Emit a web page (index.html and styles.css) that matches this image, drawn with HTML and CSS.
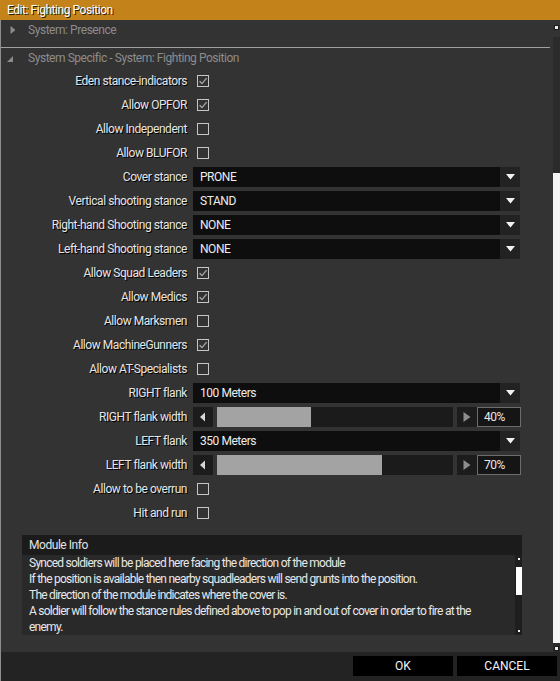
FILE: index.html
```html
<!DOCTYPE html>
<html>
<head>
<meta charset="utf-8">
<title>Edit: Fighting Position</title>
<link rel="stylesheet" href="styles.css">
</head>
<body>
<div class="window">
  <div class="titlebar">Edit: Fighting Position</div>
  <div class="content">
    <div class="main">
      <div class="section-head first">
        <svg class="tri" width="12" height="12" viewBox="0 0 12 12"><polygon points="8,2 13,6 8,10" fill="#8a8a8a" transform="translate(-0.5,0)"/></svg>
        <span>System: Presence</span>
      </div>
      <div class="section-head second">
        <svg class="tri" width="14" height="12" viewBox="0 0 14 12"><polygon points="13,4 13,10 7,10" fill="#8a8a8a"/></svg>
        <span>System Specific - System: Fighting Position</span>
      </div>

      <div class="rows">
        <div class="label">Eden stance-indicators</div>
        <div class="ctrl"><span class="check"><svg width="12" height="12" viewBox="0 0 12 12"><path d="M2.6 6.2 L5 8.6 L9.6 3.2" fill="none" stroke="#a8a8a8" stroke-width="1.3"/></svg></span></div>

        <div class="label">Allow OPFOR</div>
        <div class="ctrl"><span class="check"><svg width="12" height="12" viewBox="0 0 12 12"><path d="M2.6 6.2 L5 8.6 L9.6 3.2" fill="none" stroke="#a8a8a8" stroke-width="1.3"/></svg></span></div>

        <div class="label">Allow Independent</div>
        <div class="ctrl"><span class="check"></span></div>

        <div class="label">Allow BLUFOR</div>
        <div class="ctrl"><span class="check"></span></div>

        <div class="label">Cover stance</div>
        <div class="ctrl"><div class="combo"><span class="combo-text">PRONE</span><span class="combo-arrow"><svg width="9" height="6" viewBox="0 0 9 6"><polygon points="0,0 9,0 4.5,5.5" fill="#f0f0f0"/></svg></span></div></div>

        <div class="label">Vertical shooting stance</div>
        <div class="ctrl"><div class="combo"><span class="combo-text">STAND</span><span class="combo-arrow"><svg width="9" height="6" viewBox="0 0 9 6"><polygon points="0,0 9,0 4.5,5.5" fill="#f0f0f0"/></svg></span></div></div>

        <div class="label">Right-hand Shooting stance</div>
        <div class="ctrl"><div class="combo"><span class="combo-text">NONE</span><span class="combo-arrow"><svg width="9" height="6" viewBox="0 0 9 6"><polygon points="0,0 9,0 4.5,5.5" fill="#f0f0f0"/></svg></span></div></div>

        <div class="label">Left-hand Shooting stance</div>
        <div class="ctrl"><div class="combo"><span class="combo-text">NONE</span><span class="combo-arrow"><svg width="9" height="6" viewBox="0 0 9 6"><polygon points="0,0 9,0 4.5,5.5" fill="#f0f0f0"/></svg></span></div></div>

        <div class="label">Allow Squad Leaders</div>
        <div class="ctrl"><span class="check"><svg width="12" height="12" viewBox="0 0 12 12"><path d="M2.6 6.2 L5 8.6 L9.6 3.2" fill="none" stroke="#a8a8a8" stroke-width="1.3"/></svg></span></div>

        <div class="label">Allow Medics</div>
        <div class="ctrl"><span class="check"><svg width="12" height="12" viewBox="0 0 12 12"><path d="M2.6 6.2 L5 8.6 L9.6 3.2" fill="none" stroke="#a8a8a8" stroke-width="1.3"/></svg></span></div>

        <div class="label">Allow Marksmen</div>
        <div class="ctrl"><span class="check"></span></div>

        <div class="label">Allow MachineGunners</div>
        <div class="ctrl"><span class="check"><svg width="12" height="12" viewBox="0 0 12 12"><path d="M2.6 6.2 L5 8.6 L9.6 3.2" fill="none" stroke="#a8a8a8" stroke-width="1.3"/></svg></span></div>

        <div class="label">Allow AT-Specialists</div>
        <div class="ctrl"><span class="check"></span></div>

        <div class="label">RIGHT flank</div>
        <div class="ctrl"><div class="combo"><span class="combo-text">100 Meters</span><span class="combo-arrow"><svg width="9" height="6" viewBox="0 0 9 6"><polygon points="0,0 9,0 4.5,5.5" fill="#f0f0f0"/></svg></span></div></div>

        <div class="label">RIGHT flank width</div>
        <div class="ctrl">
          <div class="slider">
            <span class="sbtn"><svg width="6" height="10" viewBox="0 0 6 10"><polygon points="5,0.5 5,9.5 0,5" fill="#d8d8d8"/></svg></span>
            <span class="track"><span class="fill" style="width:40%"></span></span>
            <span class="sbtn"><svg width="8" height="10" viewBox="0 0 8 10"><polygon points="0.5,0 0.5,10 7.5,5" fill="#8c8c8c"/></svg></span>
            <span class="value">40%</span>
          </div>
        </div>

        <div class="label">LEFT flank</div>
        <div class="ctrl"><div class="combo"><span class="combo-text">350 Meters</span><span class="combo-arrow"><svg width="9" height="6" viewBox="0 0 9 6"><polygon points="0,0 9,0 4.5,5.5" fill="#f0f0f0"/></svg></span></div></div>

        <div class="label">LEFT flank width</div>
        <div class="ctrl">
          <div class="slider">
            <span class="sbtn"><svg width="6" height="10" viewBox="0 0 6 10"><polygon points="5,0.5 5,9.5 0,5" fill="#d8d8d8"/></svg></span>
            <span class="track"><span class="fill" style="width:70%"></span></span>
            <span class="sbtn"><svg width="8" height="10" viewBox="0 0 8 10"><polygon points="0.5,0 0.5,10 7.5,5" fill="#8c8c8c"/></svg></span>
            <span class="value">70%</span>
          </div>
        </div>

        <div class="label">Allow to be overrun</div>
        <div class="ctrl"><span class="check"></span></div>

        <div class="label">Hit and run</div>
        <div class="ctrl"><span class="check"></span></div>
      </div>

      <div class="info">
        <div class="info-head">Module Info</div>
        <div class="info-body">
          <div class="info-text">
            <div>Synced soldiers will be placed here facing the direction of the module</div>
            <div>If the position is available then nearby squadleaders will send grunts into the position.</div>
            <div>The direction of the module indicates where the cover is.</div>
            <div>A soldier will follow the stance rules defined above to pop in and out of cover in order to fire at the</div>
            <div>enemy.</div>
          </div>
          <div class="info-scroll">
            <span class="dot"></span>
            <span class="info-thumb"></span>
            <span class="info-gap"></span>
            <span class="dot"></span>
          </div>
        </div>
      </div>
    </div>
    <div class="vscroll">
      <div class="vs-top"><span class="dot"></span></div>
      <div class="vs-track"></div>
      <div class="vs-thumb"></div>
      <div class="vs-bottom"><span class="dot"></span></div>
    </div>
  </div>
  <div class="footer">
    <button class="btn">OK</button>
    <button class="btn">CANCEL</button>
  </div>
</div>
</body>
</html>
```

FILE: styles.css
```css
* { box-sizing: border-box; }

html, body {
  margin: 0;
  padding: 0;
  background: #2a2a2a;
}

body {
  font-family: Roboto, "Liberation Sans", sans-serif;
  font-size: 12px;
  letter-spacing: -0.45px;
  color: #e4e4e4;
}

.window {
  width: 560px;
  height: 681px;
  display: flex;
  flex-direction: column;
  overflow: hidden;
}

.titlebar {
  height: 20px;
  line-height: 20px;
  background: #c4821a;
  color: #ffffff;
  padding-left: 7px;
  text-shadow: 1px 1px 0 #2a1a00;
  flex: none;
}

.content {
  height: 632px;
  display: flex;
  flex: none;
  background: #333333;
  border-left: 1px solid #8e8e8e;
}

.main {
  flex: 1;
  display: flex;
  flex-direction: column;
}

.section-head {
  display: flex;
  align-items: center;
  color: #8c8c8c;
  height: 20px;
}

.section-head .tri {
  flex: none;
  margin-left: 2px;
  margin-right: 13px;
}

.section-head.first {
  margin-bottom: 7px;
}

.section-head.second {
  border-top: 1px solid #a0a0a0;
  height: 21px;
  margin-right: 3px;
  margin-bottom: 1px;
}

.section-head.second .tri {
  margin-left: -1px;
  margin-right: 14px;
}

.rows {
  display: grid;
  grid-template-columns: 186px 327px;
  grid-auto-rows: 24px;
  column-gap: 6px;
  align-items: center;
}

.label {
  text-align: right;
  color: #e6e6e6;
  text-shadow: 1px 1px 0 #000;
  white-space: nowrap;
}

.ctrl {
  display: flex;
  align-items: center;
  height: 24px;
}

.check {
  width: 12px;
  height: 12px;
  margin-left: 4px;
  border: 1px solid #c6c6c6;
  display: flex;
  align-items: center;
  justify-content: center;
}

.check svg {
  flex: none;
}

.combo {
  width: 327px;
  height: 20px;
  display: flex;
  background: #0e0e0e;
}

.combo-text {
  flex: 1;
  line-height: 20px;
  padding-left: 7px;
  color: #ececec;
}

.combo-arrow {
  width: 20px;
  background: #222222;
  display: flex;
  align-items: center;
  justify-content: center;
}

.slider {
  width: 328px;
  height: 20px;
  display: flex;
  gap: 4px;
}

.sbtn {
  width: 20px;
  background: #1c1c1c;
  display: flex;
  align-items: center;
  justify-content: center;
  flex: none;
}

.track {
  width: 236px;
  background: #1b1b1b;
  display: flex;
  flex: none;
}

.fill {
  display: block;
  background: #a3a3a3;
  height: 100%;
}

.value {
  width: 44px;
  margin-left: -4px;
  background: #151515;
  border: 1px solid #6c6c6c;
  line-height: 18px;
  padding-left: 6px;
  color: #e8e8e8;
  flex: none;
}

.info {
  margin: 10px 0 0 21px;
  width: 500px;
}

.info-head {
  height: 20px;
  line-height: 20px;
  background: #1b1b1b;
  padding-left: 7px;
  color: #e2e2e2;
}

.info-body {
  height: 80px;
  background: #292929;
  display: flex;
}

.info-text {
  flex: 1;
  padding-left: 7px;
  line-height: 16px;
  color: #e8e8e8;
  white-space: nowrap;
  letter-spacing: -0.75px;
}

.info-scroll {
  width: 7px;
  background: #1e1e1e;
  display: flex;
  flex-direction: column;
  align-items: center;
  padding: 2px 0 2px;
}

.info-scroll .dot {
  width: 2px;
  height: 2px;
  background: #f2f2f2;
  margin: 1px 0;
}

.info-thumb {
  width: 6px;
  height: 28px;
  margin-top: 6px;
  margin-left: 1px;
  background: #ffffff;
}

.info-gap {
  flex: 1;
}

.vscroll {
  width: 7px;
  display: flex;
  flex-direction: column;
}

.vs-top {
  height: 17px;
  display: flex;
  justify-content: center;
  padding-top: 6px;
}

.vs-top .dot, .vs-bottom .dot {
  width: 3px;
  height: 3px;
  background: #ececec;
  box-shadow: 0 0 0 1px #1c1c1c;
}

.vs-track {
  height: 136px;
  background: #2b2b2b;
}

.vs-thumb {
  height: 470px;
  background: #f4f4f4;
}

.vs-bottom {
  flex: 1;
  background: #2b2b2b;
  display: flex;
  justify-content: center;
  padding-top: 4px;
}

.footer {
  flex: 1;
  background: #232323;
  border-left: 1px solid #8e8e8e;
  display: flex;
  justify-content: flex-end;
  align-items: flex-start;
  gap: 4px;
  padding: 4px 3px 0 0;
}

.btn {
  width: 100px;
  height: 20px;
  background: #000000;
  color: #f4f4f4;
  border: none;
  font-family: Roboto, "Liberation Sans", sans-serif;
  font-size: 12px;
  letter-spacing: 0;
  padding: 0;
  line-height: 20px;
}
```
